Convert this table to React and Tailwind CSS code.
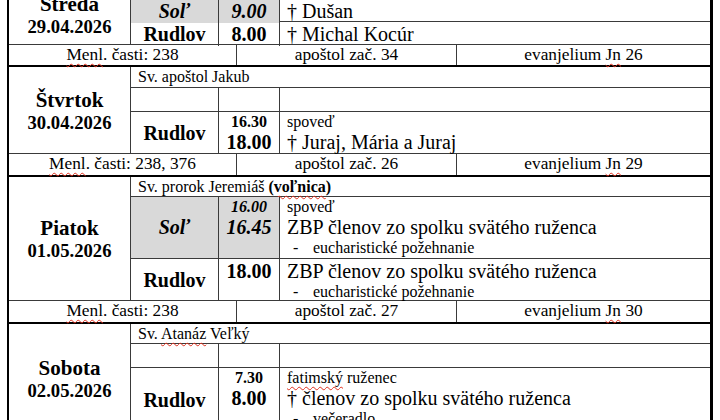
const line = 'border-[#3a3a3a]'

function Sp({ children }) {
  return (
    <span className="underline decoration-wavy decoration-[#e0301e] decoration-1 underline-offset-[3px]">
      {children}
    </span>
  )
}

function Dash({ children }) {
  return (
    <div className="flex text-[16px] leading-[18px]">
      <span className="w-[26px] shrink-0 pl-[6px]">-</span>
      <span>{children}</span>
    </div>
  )
}

function Row({ h, place, times, desc, gray, last }) {
  const shade = gray ? 'bg-[#d9d9d9] italic' : ''
  return (
    <div className={`grid grid-cols-[88px_61px_1fr] ${h} ${last ? '' : `border-b ${line}`}`}>
      <div className={`flex items-center justify-center border-r ${line} text-[20px] leading-[23px] font-bold ${shade}`}>
        {place}
      </div>
      <div className={`flex flex-col items-center border-r ${line} pt-[1px] font-bold ${shade}`}>
        {times.map((t, i) => (
          <span key={i} className={t.small ? 'text-[16px] leading-[18px]' : 'text-[20px] leading-[23px]'}>
            {t.v}
          </span>
        ))}
      </div>
      <div className="pl-[7px] pt-[1px]">{desc}</div>
    </div>
  )
}

function Big({ children }) {
  return <div className="text-[20px] leading-[23px]">{children}</div>
}

function Small({ children }) {
  return <div className="text-[16px] leading-[18px]">{children}</div>
}

function Footer({ h, menl, apostol, jn }) {
  return (
    <div className={`grid grid-cols-[228px_220px_1fr] ${h} border-b-2 border-black text-[17.33px] leading-[20px]`}>
      <div className={`border-r ${line} text-center`}>
        <Sp>Menl</Sp>. časti: {menl}
      </div>
      <div className={`border-r ${line} text-center`}>apoštol zač. {apostol}</div>
      <div className="text-center">
        evanjelium <Sp>Jn</Sp> {jn}
      </div>
    </div>
  )
}

function Block({ day, date, saint, saintH, dayAlign, children }) {
  return (
    <div className={`flex border-b ${line}`}>
      <div className={`flex w-[122px] shrink-0 flex-col items-center border-r ${line} font-bold ${dayAlign}`}>
        <div className="text-[21px] leading-[24px]">{day}</div>
        <div className="text-[18.67px] leading-[21px]">{date}</div>
      </div>
      <div className="flex flex-1 flex-col">
        <div className={`${saintH} border-b ${line} pl-[7px] text-[16px] leading-[19px]`}>{saint}</div>
        {children}
      </div>
    </div>
  )
}

const empty = <Row h="h-[24px]" place="" times={[]} desc="" />

export default function App() {
  return (
    <div className="h-[420px] w-[720px] overflow-hidden bg-white font-serif text-black">
      <div className="-mt-[22px] ml-[7px] w-[706px] border-l-2 border-r-[3px] border-black [font-family:Liberation_Serif,serif]">
        <Block day="Streda" date="29.04.2026" saint="" saintH="h-[21px]" dayAlign="justify-end pb-[7px]">
          <Row h="h-[23px]" gray place="Soľ" times={[{ v: '9.00' }]} desc={<Big>† Dušan</Big>} />
          <Row h="h-[22px]" last place="Rudlov" times={[{ v: '8.00' }]} desc={<Big>† Michal Kocúr</Big>} />
        </Block>
        <Footer h="h-[22px]" menl="238" apostol="34" jn="26" />

        <Block day="Štvrtok" date="30.04.2026" saint="Sv. apoštol Jakub" saintH="h-[21px]" dayAlign="justify-center">
          {empty}
          <Row
            h="h-[41px]"
            last
            place="Rudlov"
            times={[{ v: '16.30', small: true }, { v: '18.00' }]}
            desc={
              <>
                <Small>spoveď</Small>
                <Big>† Juraj, Mária a Juraj</Big>
              </>
            }
          />
        </Block>
        <Footer h="h-[23px]" menl="238, 376" apostol="26" jn="29" />

        <Block
          day="Piatok"
          date="01.05.2026"
          saint={
            <>
              Sv. prorok Jeremiáš{' '}
              <b>
                (<Sp>voľnica</Sp>)
              </b>
            </>
          }
          saintH="h-[20px]"
          dayAlign="justify-center"
        >
          <Row
            h="h-[62px]"
            gray
            place="Soľ"
            times={[{ v: '16.00', small: true }, { v: '16.45' }]}
            desc={
              <>
                <Small>spoveď</Small>
                <Big>ZBP členov zo spolku svätého ruženca</Big>
                <Dash>eucharistické požehnanie</Dash>
              </>
            }
          />
          <Row
            h="h-[41px]"
            last
            place="Rudlov"
            times={[{ v: '18.00' }]}
            desc={
              <>
                <Big>ZBP členov zo spolku svätého ruženca</Big>
                <Dash>eucharistické požehnanie</Dash>
              </>
            }
          />
        </Block>
        <Footer h="h-[23px]" menl="238" apostol="27" jn="30" />

        <Block
          day="Sobota"
          date="02.05.2026"
          saint={
            <>
              Sv. <Sp>Atanáz</Sp> Veľký
            </>
          }
          saintH="h-[20px]"
          dayAlign="justify-center"
        >
          {empty}
          <Row
            h="h-[64px]"
            last
            place="Rudlov"
            times={[{ v: '7.30', small: true }, { v: '8.00' }]}
            desc={
              <>
                <Small>
                  <Sp>fatimský</Sp> ruženec
                </Small>
                <Big>† členov zo spolku svätého ruženca</Big>
                <Dash>večeradlo</Dash>
              </>
            }
          />
        </Block>
      </div>
    </div>
  )
}
